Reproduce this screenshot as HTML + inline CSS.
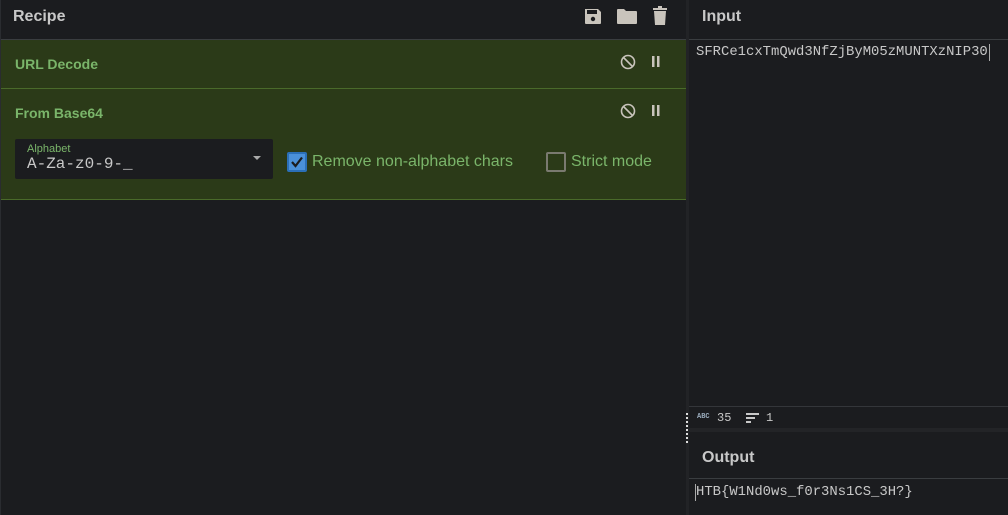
<!DOCTYPE html>
<html><head><style>
*{margin:0;padding:0;box-sizing:border-box}
body{width:1008px;height:515px;background:#1b1c1f;font-family:"Liberation Sans",sans-serif;position:relative;overflow:hidden}
.abs{position:absolute}
.mono{font-family:"Liberation Mono",monospace}
</style></head><body>
<div class="abs" style="left:0;top:0;width:686px;height:515px;background:#1b1c1f;border-left:1px solid #2a2c30"></div>
<div class="abs" style="left:13px;top:8px;font-size:16px;font-weight:bold;color:#c8c8c8">Recipe</div>
<svg class="abs" style="left:584px;top:7px" width="18" height="18" viewBox="0 0 18 18"><path d="M1 2h13l3 3v11a1 1 0 0 1-1 1H2a1 1 0 0 1-1-1z" fill="#c9c4bc"/><rect x="3" y="3" width="10" height="4" fill="#1b1c1f"/><circle cx="9" cy="12" r="2.2" fill="#1b1c1f"/></svg>
<svg class="abs" style="left:616px;top:8px" width="22" height="17" viewBox="0 0 22 17"><path d="M1 2a1 1 0 0 1 1-1h6l2 2h10a1 1 0 0 1 1 1v11a1 1 0 0 1-1 1H2a1 1 0 0 1-1-1z" fill="#c9c4bc"/></svg>
<svg class="abs" style="left:652px;top:6px" width="16" height="20" viewBox="0 0 16 20"><rect x="1" y="2" width="14" height="2" fill="#c9c4bc"/><rect x="6" y="0" width="4" height="2" fill="#c9c4bc"/><path d="M2 5h12l-1 14H3z" fill="#c9c4bc"/></svg>
<div class="abs" style="left:1px;top:39px;width:685px;height:1px;background:#3a3d40"></div>
<div class="abs" style="left:1px;top:40px;width:685px;height:160px;background:#2b3a18"></div>
<div class="abs" style="left:1px;top:88px;width:685px;height:1px;background:#4a6a2a"></div>
<div class="abs" style="left:1px;top:199px;width:685px;height:1px;background:#4a6a2a"></div>
<div class="abs" style="left:15px;top:56px;font-size:14px;font-weight:bold;color:#7ab56a">URL Decode</div>
<div class="abs" style="left:15px;top:105px;font-size:14px;font-weight:bold;color:#7ab56a">From Base64</div>
<svg class="abs" style="left:620px;top:54px" width="16" height="16" viewBox="0 0 16 16"><circle cx="8" cy="8" r="6.5" fill="none" stroke="#c9c4bc" stroke-width="1.6"/><path d="M3.5 3.5l9 9" stroke="#c9c4bc" stroke-width="1.6"/></svg>
<svg class="abs" style="left:620px;top:103px" width="16" height="16" viewBox="0 0 16 16"><circle cx="8" cy="8" r="6.5" fill="none" stroke="#c9c4bc" stroke-width="1.6"/><path d="M3.5 3.5l9 9" stroke="#c9c4bc" stroke-width="1.6"/></svg>
<svg class="abs" style="left:651px;top:56px" width="10" height="11"><rect x="1" y="0" width="2.5" height="11" fill="#c9c4bc"/><rect x="6" y="0" width="2.5" height="11" fill="#c9c4bc"/></svg>
<svg class="abs" style="left:651px;top:105px" width="10" height="11"><rect x="1" y="0" width="2.5" height="11" fill="#c9c4bc"/><rect x="6" y="0" width="2.5" height="11" fill="#c9c4bc"/></svg>
<div class="abs" style="left:15px;top:139px;width:258px;height:40px;background:#1b1c1f;border-radius:2px"></div>
<div class="abs" style="left:27px;top:143px;font-size:11px;color:#7ab56a">Alphabet</div>
<div class="abs mono" style="left:27px;top:155px;font-size:16px;color:#c8c8c8">A-Za-z0-9-_</div>
<div class="abs" style="left:253px;top:156px;width:0;height:0;border-left:4px solid transparent;border-right:4px solid transparent;border-top:4px solid #aaa"></div>
<div class="abs" style="left:287px;top:152px;width:20px;height:20px;background:#4a90d9;border:2px solid #2b6fb8;border-radius:2px"></div>
<svg class="abs" style="left:289px;top:154px" width="16" height="16"><path d="M3 8l3.5 4L13 3.5" fill="none" stroke="#1b1c1f" stroke-width="2.2"/></svg>
<div class="abs" style="left:312px;top:153px;font-size:16px;color:#7ab56a">Remove non-alphabet chars</div>
<div class="abs" style="left:546px;top:152px;width:20px;height:20px;border:2px solid #7a7a70;border-radius:2px"></div>
<div class="abs" style="left:571px;top:153px;font-size:16px;color:#7ab56a">Strict mode</div>
<div class="abs" style="left:686px;top:0;width:3px;height:515px;background:#222326"></div>
<div class="abs" style="left:686px;top:413px;width:2px;height:30px;background:repeating-linear-gradient(#ddd 0 2px,transparent 2px 4px)"></div>
<div class="abs" style="left:689px;top:0;width:319px;height:515px;background:#1b1c1f"></div>
<div class="abs" style="left:702px;top:8px;font-size:16px;font-weight:bold;color:#c8c8c8">Input</div>
<div class="abs" style="left:689px;top:39px;width:319px;height:1px;background:#3a3d40"></div>
<div class="abs mono" style="left:696px;top:44px;font-size:13.9px;color:#c8c8c8;white-space:nowrap">SFRCe1cxTmQwd3NfZjByM05zMUNTXzNIP30</div>
<div class="abs" style="left:989px;top:44px;width:1px;height:17px;background:#aaa"></div>
<div class="abs" style="left:689px;top:406px;width:319px;height:1px;background:#34363a"></div>
<div class="abs mono" style="left:697px;top:413px;font-size:7px;font-weight:bold;color:#9ab">ABC</div>
<div class="abs mono" style="left:717px;top:411px;font-size:12px;color:#c8c8c8">35</div>
<svg class="abs" style="left:746px;top:413px" width="14" height="10"><rect x="0" y="0" width="13" height="2" fill="#c8c8c8"/><rect x="0" y="4" width="9" height="2" fill="#c8c8c8"/><rect x="0" y="8" width="5" height="2" fill="#c8c8c8"/></svg>
<div class="abs mono" style="left:766px;top:411px;font-size:12px;color:#c8c8c8">1</div>
<div class="abs" style="left:689px;top:428px;width:319px;height:4px;background:#232427"></div>
<div class="abs" style="left:702px;top:449px;font-size:16px;font-weight:bold;color:#c8c8c8">Output</div>
<div class="abs" style="left:689px;top:478px;width:319px;height:1px;background:#3a3d40"></div>
<div class="abs mono" style="left:696px;top:484px;font-size:13.9px;color:#c8c8c8;white-space:nowrap">HTB{W1Nd0ws_f0r3Ns1CS_3H?}</div>
<div class="abs" style="left:695px;top:484px;width:1px;height:17px;background:#aaa"></div>
</body></html>
